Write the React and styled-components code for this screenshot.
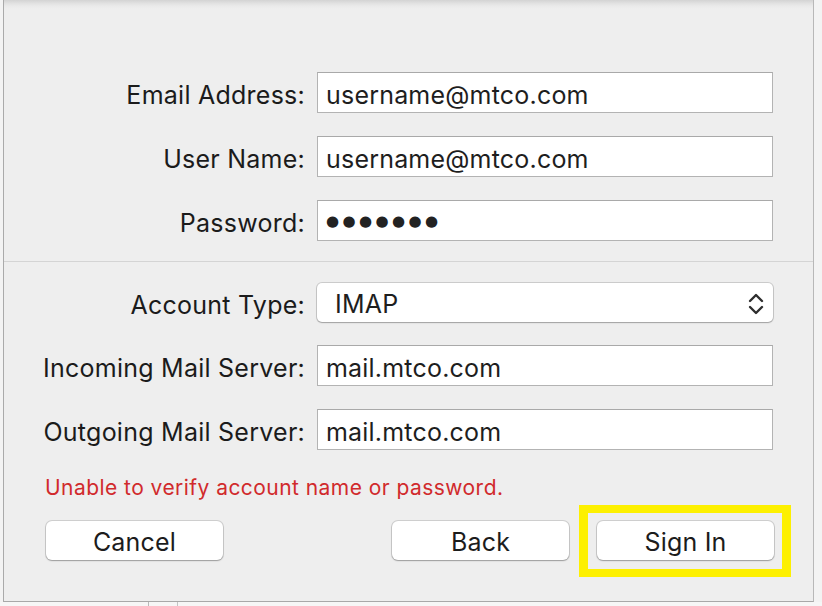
import React from 'react';
import styled, { createGlobalStyle } from 'styled-components';

const GlobalStyle = createGlobalStyle`
    html, body {
        margin: 0;
        padding: 0;
    }
    body {
        background: #f2f2f2;
        font-family: Inter, "Liberation Sans", sans-serif;
        color: #1b1b1b;
    }
`;

const Desktop = styled.div`
    width: 822px;
    height: 606px;
    overflow: hidden;
    display: flex;
    flex-direction: column;
    background: #f3f3f3;
`;

const Sheet = styled.div`
    height: 602px;
    margin: 0 8px 0 3px;
    box-sizing: border-box;
    border-left: 1px solid #aaaaaa;
    border-right: 1px solid #b8b8b8;
    border-bottom: 1px solid #a8a8a8;
    background: linear-gradient(#d3d3d3 0, #e0e0e0 3px, #eaeaea 6px, #eeeeee 9px);
    display: flex;
    flex-direction: column;
`;

// strip of the window that sits behind the sheet
const Backdrop = styled.div`
    flex: 1;
    background:
        linear-gradient(90deg, transparent 148px, #b9b9b9 148px, #b9b9b9 149px, transparent 149px,
            transparent 177px, #c4c4c4 177px, #c4c4c4 178px, transparent 178px),
        #f6f6f6;
`;

const FormGrid = styled.div`
    display: grid;
    grid-template-columns: 301px 456px;
    column-gap: 12px;
    row-gap: 23px;
    align-items: center;
    padding: ${p => p.$top}px 0 ${p => p.$bottom}px;
`;

const Divider = styled.div`
    height: 1px;
    background: #d4d4d4;
`;

const Label = styled.label`
    text-align: right;
    font-size: 25px;
    letter-spacing: 0.25px;
    white-space: nowrap;
    padding-top: 4px;
`;

const Field = styled.div`
    height: 41px;
    box-sizing: border-box;
    border: 1px solid #b3b3b3;
    border-top-color: #a9a9a9;
    background: #fff;
    padding: 4px 8px 0;
    display: flex;
    align-items: center;
    font-size: 25px;
    letter-spacing: 0.2px;
    color: #1e1e1e;
`;

const Dots = styled.span`
    font-family: "DejaVu Sans", sans-serif;
    font-size: 15px;
    letter-spacing: 3.4px;
    color: #222;
    margin-top: -3px;
`;

const SelectBox = styled.div`
    height: 39px;
    box-sizing: border-box;
    border-radius: 5px;
    background: #fff;
    box-shadow: 0 0 0 1px rgba(0, 0, 0, 0.14), 0 1px 1.5px rgba(0, 0, 0, 0.22);
    display: flex;
    align-items: center;
    justify-content: space-between;
    padding: 2px 9px 0 18px;
    font-size: 25px;
    letter-spacing: 0.2px;
    color: #1e1e1e;
`;

const ErrorText = styled.div`
    padding: 26px 0 0 41px;
    font-size: 21px;
    line-height: 24px;
    letter-spacing: 0.45px;
    color: #d12a2c;
`;

const ButtonRow = styled.div`
    display: flex;
    gap: 28px;
    padding: 21px 39px 0 42px;
`;

const Button = styled.button`
    width: 177px;
    height: 39px;
    border: none;
    border-radius: 6px;
    background: #fff;
    box-shadow: 0 0 0 1px rgba(0, 0, 0, 0.13), 0 1px 1.5px rgba(0, 0, 0, 0.25);
    font-family: inherit;
    font-size: 25px;
    letter-spacing: 0.2px;
    color: #1c1c1c;
    padding: 2px 0 0;
    &:first-child {
        margin-right: auto;
    }
`;

const Highlight = styled.div`
    position: relative;
    &::after {
        content: '';
        position: absolute;
        top: -16px;
        left: -18px;
        right: -17px;
        bottom: -17px;
        border-style: solid;
        border-color: #fdf000;
        border-width: 8px 9px;
        pointer-events: none;
    }
`;

const Chevrons = () => (
    <svg width="16" height="22" viewBox="0 0 16 22" fill="none" stroke="#2e2e2e" strokeWidth="2.4" strokeLinecap="round" strokeLinejoin="round">
        <path d="M2 8 L8 2 L14 8" />
        <path d="M2 14 L8 20 L14 14" />
    </svg>
);

const accountFields = [
    { label: 'Email Address:', value: 'username@mtco.com' },
    { label: 'User Name:', value: 'username@mtco.com' },
];

const serverFields = [
    { label: 'Incoming Mail Server:', value: 'mail.mtco.com' },
    { label: 'Outgoing Mail Server:', value: 'mail.mtco.com' },
];

const App = () => {
    return (
        <Desktop>
            <GlobalStyle />
            <Sheet>
                <FormGrid $top={72} $bottom={20}>
                    {accountFields.map(f => (
                        <React.Fragment key={f.label}>
                            <Label>{f.label}</Label>
                            <Field>{f.value}</Field>
                        </React.Fragment>
                    ))}
                    <Label>Password:</Label>
                    <Field>
                        <Dots>●●●●●●●</Dots>
                    </Field>
                </FormGrid>
                <Divider />
                <FormGrid $top={21} $bottom={0}>
                    <Label>Account Type:</Label>
                    <SelectBox>
                        <span>IMAP</span>
                        <Chevrons />
                    </SelectBox>
                    {serverFields.map(f => (
                        <React.Fragment key={f.label}>
                            <Label>{f.label}</Label>
                            <Field>{f.value}</Field>
                        </React.Fragment>
                    ))}
                </FormGrid>
                <ErrorText>Unable to verify account name or password.</ErrorText>
                <ButtonRow>
                    <Button>Cancel</Button>
                    <Button>Back</Button>
                    <Highlight>
                        <Button>Sign In</Button>
                    </Highlight>
                </ButtonRow>
            </Sheet>
            <Backdrop />
        </Desktop>
    );
};

export default App;
